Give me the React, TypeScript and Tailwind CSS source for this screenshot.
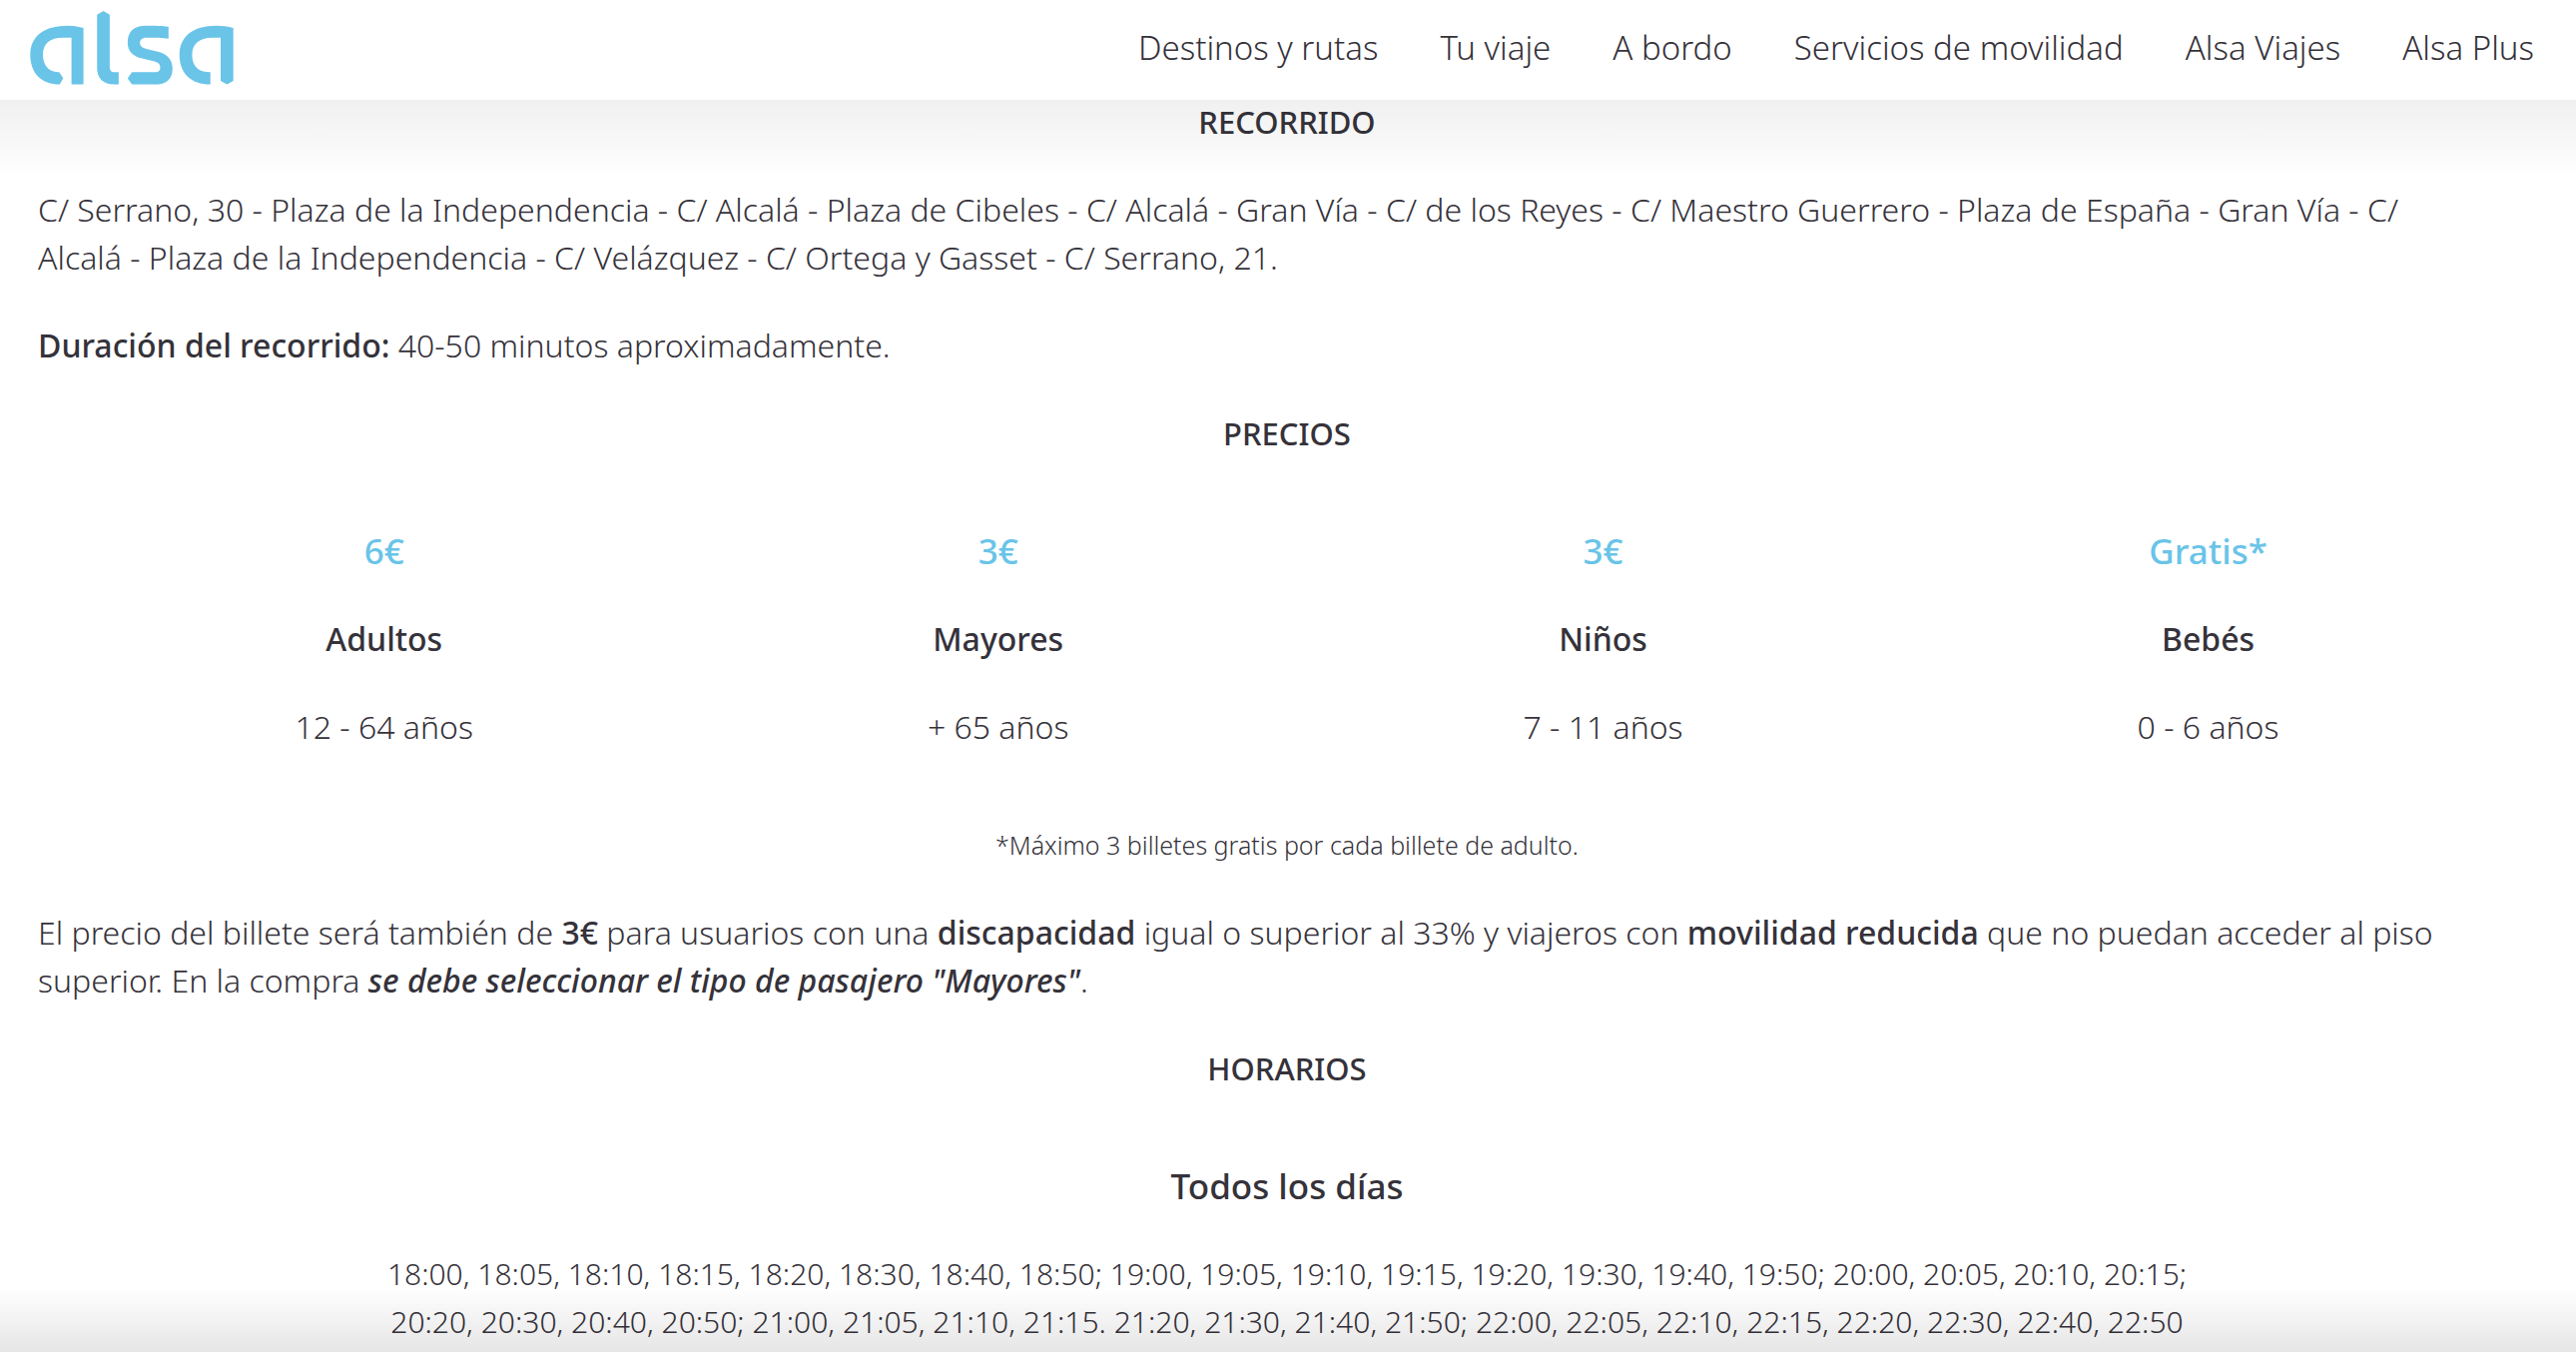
const navLinks = [
  'Destinos y rutas',
  'Tu viaje',
  'A bordo',
  'Servicios de movilidad',
  'Alsa Viajes',
  'Alsa Plus',
]

const prices = [
  { price: '6€', name: 'Adultos', ages: '12 - 64 años' },
  { price: '3€', name: 'Mayores', ages: '+ 65 años' },
  { price: '3€', name: 'Niños', ages: '7 - 11 años' },
  { price: 'Gratis*', name: 'Bebés', ages: '0 - 6 años' },
]

function Logo() {
  return (
    <svg viewBox="90 33 613 222" className="h-[74px] w-[204px]" fill="#69c4e8" aria-hidden="true">
      <path d="M251 84V254H215V113H190C150 113 129 130 129 165C129 200 150 217 178 217L190 235L180 254C125 254 91 220 91 165C91 110 130 77 205 77C225 77 238 80 251 84Z" />
      <path d="M292 44L311 33L330 44V200C330 213 336 217 346 217H357V254H345C310 254 292 235 292 205Z" />
      <path d="M507 80V116C490 113 465 113 440 113C427 113 421 120 421 129C421 138 427 144 440 147L475 155C505 162 519 180 519 207C519 238 500 254 465 254H397L384 236L397 217H465C477 217 482 212 482 203C482 192 475 188 462 184L425 175C398 168 384 152 384 128C384 95 402 77 440 77C465 77 490 77 507 80Z" />
      <path d="M702 84V243L683 254L664 243V113H640C597 113 578 133 578 165C578 200 597 217 633 217V254C575 254 540 220 540 165C540 110 580 77 650 77C670 77 685 79 702 84Z" />
    </svg>
  )
}

function Header() {
  return (
    <header className="sticky top-0 z-10 bg-white">
      <div className="flex h-[100px] items-center justify-between pr-[42px] pb-1 pl-[30px]">
        <a href="#" aria-label="Alsa">
          <Logo />
        </a>
        <nav className="flex gap-[62px] text-[33px]">
          {navLinks.map((link) => (
            <a key={link} href="#" className="hover:text-[#69c4e8]">
              {link}
            </a>
          ))}
        </nav>
      </div>
      <div className="pointer-events-none absolute inset-x-0 top-full h-20 bg-linear-to-b from-black/6 to-transparent"></div>
    </header>
  )
}

function App() {
  return (
    <div className="min-h-screen bg-white font-['Noto_Sans','Open_Sans',sans-serif] text-[32px] leading-12 font-light text-[#35323a]">
      <Header />

      <main className="-mt-0.5 pr-10 pl-[38px]">
        <section>
          <h2 className="text-center text-[31px] font-medium">RECORRIDO</h2>
          <p className="mt-10">
            C/ Serrano, 30 - Plaza de la Independencia - C/ Alcalá - Plaza de Cibeles - C/ Alcalá -
            Gran Vía - C/ de los Reyes - C/ Maestro Guerrero - Plaza de España - Gran Vía - C/
            <br />
            Alcalá - Plaza de la Independencia - C/ Velázquez - C/ Ortega y Gasset - C/ Serrano, 21.
          </p>
          <p className="mt-10">
            <strong className="font-medium">Duración del recorrido:</strong> 40-50 minutos
            aproximadamente.
          </p>
        </section>

        <section className="mt-10">
          <h2 className="text-center text-[31px] font-medium">PRECIOS</h2>
          <div className="mx-[30px] my-[70px] flex justify-around text-center">
            {prices.map((item) => (
              <div key={item.name} className="flex flex-col gap-10">
                <p className="text-[35px] leading-12 font-medium text-[#69c4e8]">{item.price}</p>
                <h3 className="font-medium">{item.name}</h3>
                <p>{item.ages}</p>
              </div>
            ))}
          </div>
          <p className="text-center text-[25px]">
            *Máximo 3 billetes gratis por cada billete de adulto.
          </p>
          <p className="mt-10">
            El precio del billete será también de <strong className="font-medium">3€</strong> para
            usuarios con una <strong className="font-medium">discapacidad</strong> igual o superior
            al 33% y viajeros con <strong className="font-medium">movilidad reducida</strong> que no
            puedan acceder al piso
            <br />
            superior. En la compra{' '}
            <strong className="font-medium italic">
              se debe seleccionar el tipo de pasajero "Mayores"
            </strong>
            .
          </p>
        </section>

        <section className="mt-10 text-center">
          <h2 className="text-[31px] font-medium">HORARIOS</h2>
          <h3 className="mt-[70px] text-[35px] leading-12 font-medium">Todos los días</h3>
          <p className="mx-auto mt-10 max-w-[1860px] text-[30px]">
            18:00, 18:05, 18:10, 18:15, 18:20, 18:30, 18:40, 18:50; 19:00, 19:05, 19:10, 19:15,
            19:20, 19:30, 19:40, 19:50; 20:00, 20:05, 20:10, 20:15; 20:20, 20:30, 20:40, 20:50;
            21:00, 21:05, 21:10, 21:15. 21:20, 21:30, 21:40, 21:50; 22:00, 22:05, 22:10, 22:15,
            22:20, 22:30, 22:40, 22:50
          </p>
        </section>
      </main>

      <div className="pointer-events-none fixed inset-x-0 bottom-0 h-16 bg-linear-to-t from-black/10 to-transparent"></div>
    </div>
  )
}

export default App
